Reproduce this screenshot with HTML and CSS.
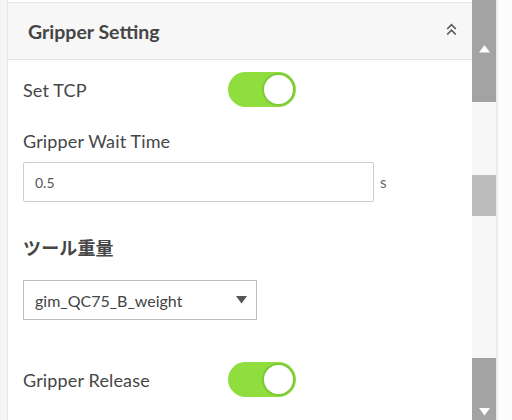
FILE: index.html
```html
<!DOCTYPE html>
<html>
<head>
<meta charset="utf-8">
<link rel="stylesheet" href="styles.css">
</head>
<body>
<div class="frame">
  <div class="gutter"></div>
  <div class="panel">
    <div class="topstrip"></div>
    <div class="header">
      <span class="title">Gripper Setting</span>
      <svg class="chev" width="11" height="13" viewBox="0 0 11 13">
        <polyline points="1.2,6 5.5,1.6 9.8,6" fill="none" stroke="#5a5a5a" stroke-width="1.7"/>
        <polyline points="1.2,11.5 5.5,7.1 9.8,11.5" fill="none" stroke="#5a5a5a" stroke-width="1.7"/>
      </svg>
    </div>
    <div class="content">
      <div class="row row-tcp">
        <span class="label">Set TCP</span>
        <div class="toggle"><div class="knob"></div></div>
      </div>
      <div class="label label-wait">Gripper Wait Time</div>
      <div class="inputrow">
        <div class="input">0.5</div>
        <span class="unit">s</span>
      </div>
      <div class="label bold label-weight">ツール重量</div>
      <div class="select">
        <span>gim_QC75_B_weight</span>
        <svg class="caret" width="11" height="8" viewBox="0 0 11 8"><polygon points="0,0 11,0 5.5,7.5" fill="#555"/></svg>
      </div>
      <div class="row row-release">
        <span class="label">Gripper Release</span>
        <div class="toggle"><div class="knob"></div></div>
      </div>
    </div>
  </div>
  <div class="scrollbar">
    <div class="sb-top"><svg width="11" height="8" viewBox="0 0 11 8"><polygon points="5.5,0 11,7.5 0,7.5" fill="#fff"/></svg></div>
    <div class="sb-track1"></div>
    <div class="sb-thumb"></div>
    <div class="sb-track2"></div>
    <div class="sb-bottom"><svg width="11" height="8" viewBox="0 0 11 8"><polygon points="0,0 11,0 5.5,7.5" fill="#fff"/></svg></div>
  </div>
  <div class="rightpad"></div>
</div>
</body>
</html>
```

FILE: styles.css
```css
html, body {
  margin: 0;
  padding: 0;
  background: #fff;
}
body {
  font-family: Lato, "Noto Sans CJK JP", sans-serif;
  color: #444;
  overflow: hidden;
}
.frame {
  display: flex;
  width: 512px;
  height: 420px;
  overflow: hidden;
}
.gutter {
  width: 7px;
  background: #f6f6f6;
  border-right: 1px solid #e6e6e6;
  flex: none;
}
.panel {
  width: 464px;
  flex: none;
  background: #fff;
}
.topstrip {
  height: 2px;
  background: #fff;
  border-bottom: 1px solid #e6e6e6;
}
.header {
  height: 57px;
  background: #f7f7f7;
  border-bottom: 1px solid #e3e3e3;
  display: flex;
  align-items: center;
  justify-content: space-between;
  padding: 0 15px 0 20px;
  box-sizing: border-box;
}
.title {
  font-weight: 700;
  font-size: 19.5px;
  color: #454545;
}
.chev {
  display: block;
  margin-top: -4px;
}
.content {
  padding: 0 0 0 15px;
}
.label {
  font-size: 18px;
  color: #464646;
  letter-spacing: 0.15px;
}
.bold {
  font-weight: 700;
}
.row {
  display: flex;
  align-items: center;
  height: 35px;
}
.row .label {
  width: 205px;
}
.row-tcp {
  margin-top: 12px;
}
.toggle {
  width: 68px;
  height: 35px;
  border-radius: 18px;
  background: #8fde3e;
  box-sizing: border-box;
  display: flex;
  justify-content: flex-end;
  align-items: center;
  padding-right: 1px;
}
.knob {
  width: 33px;
  height: 33px;
  border-radius: 50%;
  background: #fff;
  border: 2px solid #7fc838;
  box-sizing: border-box;
}
.label-wait {
  margin-top: 21px;
  line-height: 26px;
}
.inputrow {
  display: flex;
  align-items: center;
  margin-top: 8px;
}
.input {
  width: 351px;
  height: 40px;
  border: 1px solid #cfcfcf;
  border-radius: 2px;
  box-sizing: border-box;
  display: flex;
  align-items: center;
  padding-left: 11px;
  font-size: 14px;
  color: #555;
}
.unit {
  margin-left: 6px;
  font-size: 15px;
  color: #666;
}
.label-weight {
  margin-top: 33px;
  line-height: 26px;
}
.select {
  margin-top: 19px;
  width: 234px;
  height: 40px;
  border: 1px solid #bdbdbd;
  box-sizing: border-box;
  display: flex;
  align-items: center;
  justify-content: space-between;
  padding: 0 9px 0 11px;
  font-size: 16px;
  color: #444;
}
.caret {
  display: block;
}
.row-release {
  margin-top: 42px;
}
.scrollbar {
  width: 24px;
  flex: none;
  display: flex;
  flex-direction: column;
}
.sb-top {
  height: 102px;
  background: #a3a3a3;
  display: flex;
  justify-content: center;
  padding-top: 45px;
  box-sizing: border-box;
}
.sb-top svg, .sb-bottom svg {
  display: block;
}
.sb-track1 {
  height: 73px;
  background: #f7f7f7;
}
.sb-thumb {
  height: 41px;
  background: #bcbcbc;
}
.sb-track2 {
  height: 142px;
  background: #f7f7f7;
}
.sb-bottom {
  flex: 1;
  background: #a3a3a3;
  display: flex;
  justify-content: center;
  align-items: flex-end;
  padding-bottom: 4px;
}
.rightpad {
  flex: 1;
  background: #fcfcfc;
  border-left: 2px solid #ececec;
}
```
